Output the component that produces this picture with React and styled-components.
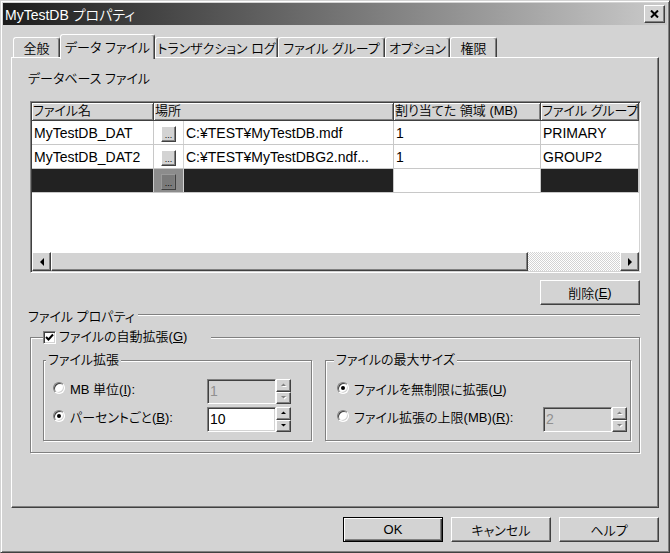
import React from "react";
import styled, { createGlobalStyle, css } from "styled-components";

const GlobalStyle = createGlobalStyle`
  html, body {
    margin: 0;
    padding: 0;
    background: #d3d3d3;
  }
  body {
    font-family: "Liberation Sans", "Noto Sans CJK JP", sans-serif;
    font-size: 13px;
    font-weight: 350;
    font-feature-settings: "palt";
    color: #000;
  }
  * {
    box-sizing: border-box;
  }
`;

const raised = css`
  border: 1px solid;
  border-color: #fff #404040 #404040 #fff;
  box-shadow: inset -1px -1px #808080;
  background: #d3d3d3;
`;

const sunken = css`
  border: 1px solid;
  border-color: #808080 #fff #fff #808080;
  box-shadow: inset 1px 1px #404040, inset -1px -1px #d3d3d3;
`;

const etched = css`
  border: 1px solid #808080;
  box-shadow: inset 1px 1px #fff, 1px 1px #fff;
`;

const COLS = "122px 240px 147px 98px";

const Window = styled.div`
  width: 670px;
  height: 553px;
  padding: 2px;
  border: 1px solid;
  border-color: #d3d3d3 #404040 #404040 #d3d3d3;
  box-shadow: inset 1px 1px #fff, inset -1px -1px #808080;
  background: #d3d3d3;
  display: flex;
  flex-direction: column;
`;

const TitleBar = styled.div`
  height: 22px;
  padding-left: 2px;
  display: flex;
  align-items: center;
  justify-content: space-between;
  background: linear-gradient(to right, #1c1c1c, #cacaca);
  color: #fff;
  font-size: 14px;
  white-space: nowrap;
`;

const CloseButton = styled.div`
  ${raised};
  width: 21px;
  height: 18px;
  margin-right: 2px;
  display: flex;
  align-items: center;
  justify-content: center;
`;

const TabStrip = styled.div`
  height: 23px;
  margin: 9px 0 0 10px;
  display: flex;
  align-items: flex-end;
`;

const Tab = styled.div`
  width: ${(p) => p.$w}px;
  height: ${(p) => (p.$active ? 25 : 20)}px;
  margin-bottom: ${(p) => (p.$active ? -2 : 0)}px;
  padding-bottom: ${(p) => (p.$active ? 2 : 0)}px;
  display: flex;
  align-items: center;
  justify-content: center;
  border: 1px solid;
  border-bottom: none;
  border-color: #fff #404040 transparent #fff;
  border-radius: 3px 3px 0 0;
  box-shadow: inset -1px 0 #808080;
  background: #d3d3d3;
  position: relative;
  z-index: ${(p) => (p.$active ? 1 : 0)};
  white-space: nowrap;
`;

const Panel = styled.div`
  height: 451px;
  margin: 0 8px;
  padding: 13px 17px 0 18px;
  border: 1px solid;
  border-color: #fff #404040 #404040 #fff;
  box-shadow: inset -1px -1px #808080;
  display: flex;
  flex-direction: column;
`;

const SectionLabel = styled.div`
  height: 16px;
  line-height: 16px;
  margin-left: -2px;
  white-space: nowrap;
`;

const Grid = styled.div`
  ${sunken};
  margin-top: 14px;
  height: 172px;
  padding: 1px;
  background: #fff;
  display: flex;
  flex-direction: column;
  overflow: hidden;
`;

const HeaderRow = styled.div`
  display: grid;
  grid-template-columns: ${COLS};
  height: 18px;
  flex: none;
`;

const HeaderCell = styled.div`
  padding-left: 1px;
  line-height: 16px;
  background: #d3d3d3;
  border-right: 1px solid #404040;
  border-bottom: 1px solid #404040;
  box-shadow: inset 1px 1px #fff, inset -1px -1px #808080;
  white-space: nowrap;
  overflow: hidden;
`;

const Row = styled.div`
  display: grid;
  grid-template-columns: ${COLS};
  height: 24px;
  flex: none;
  font-size: 14px;
`;

const Cell = styled.div`
  padding-left: 2px;
  display: flex;
  align-items: center;
  border-right: 1px solid #c8c8c8;
  border-bottom: 1px solid #c8c8c8;
  background: ${(p) => (p.$dark ? "#222" : "#fff")};
  white-space: nowrap;
  overflow: hidden;
`;

const PathCell = styled(Cell)`
  padding-left: 0;
`;

const BrowseSlot = styled.div`
  width: 30px;
  height: 100%;
  flex: none;
  padding-top: 2px;
  display: flex;
  align-items: center;
  justify-content: center;
  border-right: 1px solid #d3d3d3;
  background: ${(p) => (p.$dark ? "#8c8c8c" : "transparent")};
`;

const BrowseButton = styled.div`
  ${raised};
  width: 15px;
  height: 16px;
  background: ${(p) => (p.$dark ? "#7a7a7a" : "#d3d3d3")};
  border-color: ${(p) =>
    p.$dark ? "#9a9a9a #404040 #404040 #9a9a9a" : "#fff #404040 #404040 #fff"};
  font-size: 9px;
  line-height: 8px;
  display: flex;
  align-items: flex-end;
  justify-content: center;
  padding-bottom: 2px;
`;

const PathText = styled.span`
  padding-left: 2px;
`;

const Filler = styled.div`
  flex: 1;
`;

const ScrollBar = styled.div`
  height: 19px;
  flex: none;
  display: flex;
`;

const ArrowButton = styled.div`
  ${raised};
  width: 19px;
  flex: none;
  display: flex;
  align-items: center;
  justify-content: center;
`;

const Thumb = styled.div`
  ${raised};
  width: ${(p) => p.$w}px;
  flex: none;
`;

const Track = styled.div`
  flex: 1;
  background: repeating-conic-gradient(#fff 0 25%, #d3d3d3 0 50%) 0 0 / 2px 2px;
`;

const PushButton = styled.div`
  ${raised};
  width: ${(p) => p.$w || 100}px;
  height: 25px;
  flex: none;
  display: flex;
  align-items: center;
  justify-content: center;
  white-space: nowrap;
  ${(p) =>
    p.$default &&
    css`
      border-color: #000;
      box-shadow: inset 1px 1px #fff, inset -1px -1px #404040,
        inset -2px -2px #808080;
    `}
`;

const DeleteButton = styled(PushButton)`
  align-self: flex-end;
  margin: 7px 1px 0 0;
`;

const Rule = styled.div`
  height: 16px;
  margin: 2px 1px 0 -2px;
  display: flex;
  align-items: center;
  gap: 3px;
  white-space: nowrap;
`;

const RuleLine = styled.div`
  flex: 1;
  border-top: 1px solid #808080;
  border-bottom: 1px solid #fff;
`;

const GroupBox = styled.fieldset`
  ${etched};
  margin: 0;
  min-width: 0;
  padding: ${(p) => p.$pad};
  height: ${(p) => (p.$h ? `${p.$h}px` : "auto")};
`;

const AutoGrowBox = styled(GroupBox)`
  margin: 6px 1px 0 0;
`;

const Legend = styled.legend`
  height: 16px;
  line-height: 16px;
  padding: 0 2px;
  background: #d3d3d3;
  white-space: nowrap;
`;

const CheckLegend = styled(Legend)`
  width: 168px;
  padding: 0;
  display: flex;
  align-items: center;
  gap: 3px;
`;

const CheckBox = styled.span`
  ${sunken};
  width: 13px;
  height: 13px;
  flex: none;
  background: #fff;
  display: flex;
  align-items: center;
  justify-content: center;
`;

const Columns = styled.div`
  display: grid;
  grid-template-columns: 269px 306px;
  gap: 13px;
`;

const Options = styled.div`
  padding: 11px 0 0 ${(p) => p.$indent}px;
  display: flex;
  flex-direction: column;
  gap: 3px;
`;

const OptionRow = styled.div`
  height: 25px;
  display: grid;
  grid-template-columns: ${(p) => p.$labelW}px 69px 15px;
  align-items: start;
`;

const RadioLabel = styled.label`
  height: 18px;
  display: flex;
  align-items: center;
  gap: 5px;
  white-space: nowrap;
`;

const Radio = styled.span`
  width: 12px;
  height: 12px;
  flex: none;
  border-radius: 50%;
  border: 1px solid;
  border-color: #808080 #fff #fff #808080;
  box-shadow: inset 1px 1px #404040, inset -1px -1px #d3d3d3;
  background: #fff;
  display: flex;
  align-items: center;
  justify-content: center;
  &::after {
    content: "";
    width: 4px;
    height: 4px;
    border-radius: 50%;
    background: #000;
    display: ${(p) => (p.$on ? "block" : "none")};
  }
`;

const Edit = styled.div`
  ${sunken};
  height: 25px;
  padding-left: 2px;
  line-height: 23px;
  font-size: 14px;
  background: ${(p) => (p.$disabled ? "#d3d3d3" : "#fff")};
  color: ${(p) => (p.$disabled ? "#909090" : "#000")};
`;

const Spinner = styled.div`
  height: 25px;
  display: flex;
  flex-direction: column;
`;

const SpinButton = styled.div`
  ${raised};
  flex: 1;
  display: flex;
  align-items: center;
  justify-content: center;
`;

const Footer = styled.div`
  margin: 9px 8px 0 0;
  display: flex;
  justify-content: flex-end;
  gap: 8px;
`;

const Arrow = ({ dir }) => (
  <svg width="4" height="8" viewBox="0 0 4 8">
    <polygon points={dir === "left" ? "4,0 4,8 0,4" : "0,0 0,8 4,4"} fill="#000" />
  </svg>
);

const SpinArrow = ({ up, disabled }) => {
  const pts = up ? "0,3 5,3 2.5,0.5" : "0,0 5,0 2.5,2.5";
  return (
    <svg width="6" height="4" viewBox="0 0 6 4">
      {disabled && <polygon points={pts} fill="#fff" transform="translate(1,1)" />}
      <polygon points={pts} fill={disabled ? "#808080" : "#000"} />
    </svg>
  );
};

const Spin = ({ disabled }) => (
  <Spinner>
    <SpinButton>
      <SpinArrow up disabled={disabled} />
    </SpinButton>
    <SpinButton>
      <SpinArrow disabled={disabled} />
    </SpinButton>
  </Spinner>
);

const files = [
  { name: "MyTestDB_DAT", path: "C:¥TEST¥MyTestDB.mdf", size: "1", group: "PRIMARY" },
  { name: "MyTestDB_DAT2", path: "C:¥TEST¥MyTestDBG2.ndf...", size: "1", group: "GROUP2" },
];

const tabs = [
  ["全般", 47],
  ["データ ファイル", 95],
  ["トランザクション ログ", 123],
  ["ファイル グループ", 107],
  ["オプション", 65],
  ["権限", 47],
];

export default function App() {
  return (
    <>
      <GlobalStyle />
      <Window>
        <TitleBar>
          <span>MyTestDB プロパティ</span>
          <CloseButton>
            <svg width="9" height="8" viewBox="0 0 9 8">
              <path d="M1 0.5 L8 7.5 M8 0.5 L1 7.5" stroke="#000" strokeWidth="2" />
            </svg>
          </CloseButton>
        </TitleBar>

        <TabStrip>
          {tabs.map(([label, w], i) => (
            <Tab key={label} $w={w} $active={i === 1}>
              {label}
            </Tab>
          ))}
        </TabStrip>

        <Panel>
          <SectionLabel>データベース ファイル</SectionLabel>

          <Grid>
            <HeaderRow>
              <HeaderCell>ファイル名</HeaderCell>
              <HeaderCell>場所</HeaderCell>
              <HeaderCell>割り当てた 領域 (MB)</HeaderCell>
              <HeaderCell>ファイル グループ</HeaderCell>
            </HeaderRow>
            {files.map((f) => (
              <Row key={f.name}>
                <Cell>{f.name}</Cell>
                <PathCell>
                  <BrowseSlot>
                    <BrowseButton>...</BrowseButton>
                  </BrowseSlot>
                  <PathText>{f.path}</PathText>
                </PathCell>
                <Cell>{f.size}</Cell>
                <Cell>{f.group}</Cell>
              </Row>
            ))}
            <Row>
              <Cell $dark />
              <PathCell $dark>
                <BrowseSlot $dark>
                  <BrowseButton $dark>...</BrowseButton>
                </BrowseSlot>
              </PathCell>
              <Cell />
              <Cell $dark />
            </Row>
            <Filler />
            <ScrollBar>
              <ArrowButton>
                <Arrow dir="left" />
              </ArrowButton>
              <Thumb $w={477} />
              <Track />
              <ArrowButton>
                <Arrow dir="right" />
              </ArrowButton>
            </ScrollBar>
          </Grid>

          <DeleteButton>
            削除(<u>E</u>)
          </DeleteButton>

          <Rule>
            <span>ファイル プロパティ</span>
            <RuleLine />
          </Rule>

          <AutoGrowBox $pad="7px 8px 11px 12px">
            <CheckLegend>
              <CheckBox>
                <svg width="9" height="9" viewBox="0 0 9 9">
                  <path d="M1 4 L3.5 6.5 L8 1.5" stroke="#000" strokeWidth="2" fill="none" />
                </svg>
              </CheckBox>
              <span>
                ファイルの自動拡張(<u>G</u>)
              </span>
            </CheckLegend>

            <Columns>
              <GroupBox $pad="0 0 0 2px" $h={89}>
                <Legend>ファイル拡張</Legend>
                <Options $indent={7}>
                  <OptionRow $labelW={154}>
                    <RadioLabel>
                      <Radio />
                      <span>
                        MB 単位(<u>I</u>):
                      </span>
                    </RadioLabel>
                    <Edit $disabled>1</Edit>
                    <Spin disabled />
                  </OptionRow>
                  <OptionRow $labelW={154}>
                    <RadioLabel>
                      <Radio $on />
                      <span>
                        パーセントごと(<u>B</u>):
                      </span>
                    </RadioLabel>
                    <Edit>10</Edit>
                    <Spin />
                  </OptionRow>
                </Options>
              </GroupBox>

              <GroupBox $pad="0 0 0 8px" $h={89}>
                <Legend>ファイルの最大サイズ</Legend>
                <Options $indent={3}>
                  <OptionRow $labelW={206}>
                    <RadioLabel>
                      <Radio $on />
                      <span>
                        ファイルを無制限に拡張(<u>U</u>)
                      </span>
                    </RadioLabel>
                  </OptionRow>
                  <OptionRow $labelW={206}>
                    <RadioLabel>
                      <Radio />
                      <span>
                        ファイル拡張の上限(MB)(<u>R</u>):
                      </span>
                    </RadioLabel>
                    <Edit $disabled>2</Edit>
                    <Spin disabled />
                  </OptionRow>
                </Options>
              </GroupBox>
            </Columns>
          </AutoGrowBox>
        </Panel>

        <Footer>
          <PushButton $default>OK</PushButton>
          <PushButton>キャンセル</PushButton>
          <PushButton>ヘルプ</PushButton>
        </Footer>
      </Window>
    </>
  );
}
